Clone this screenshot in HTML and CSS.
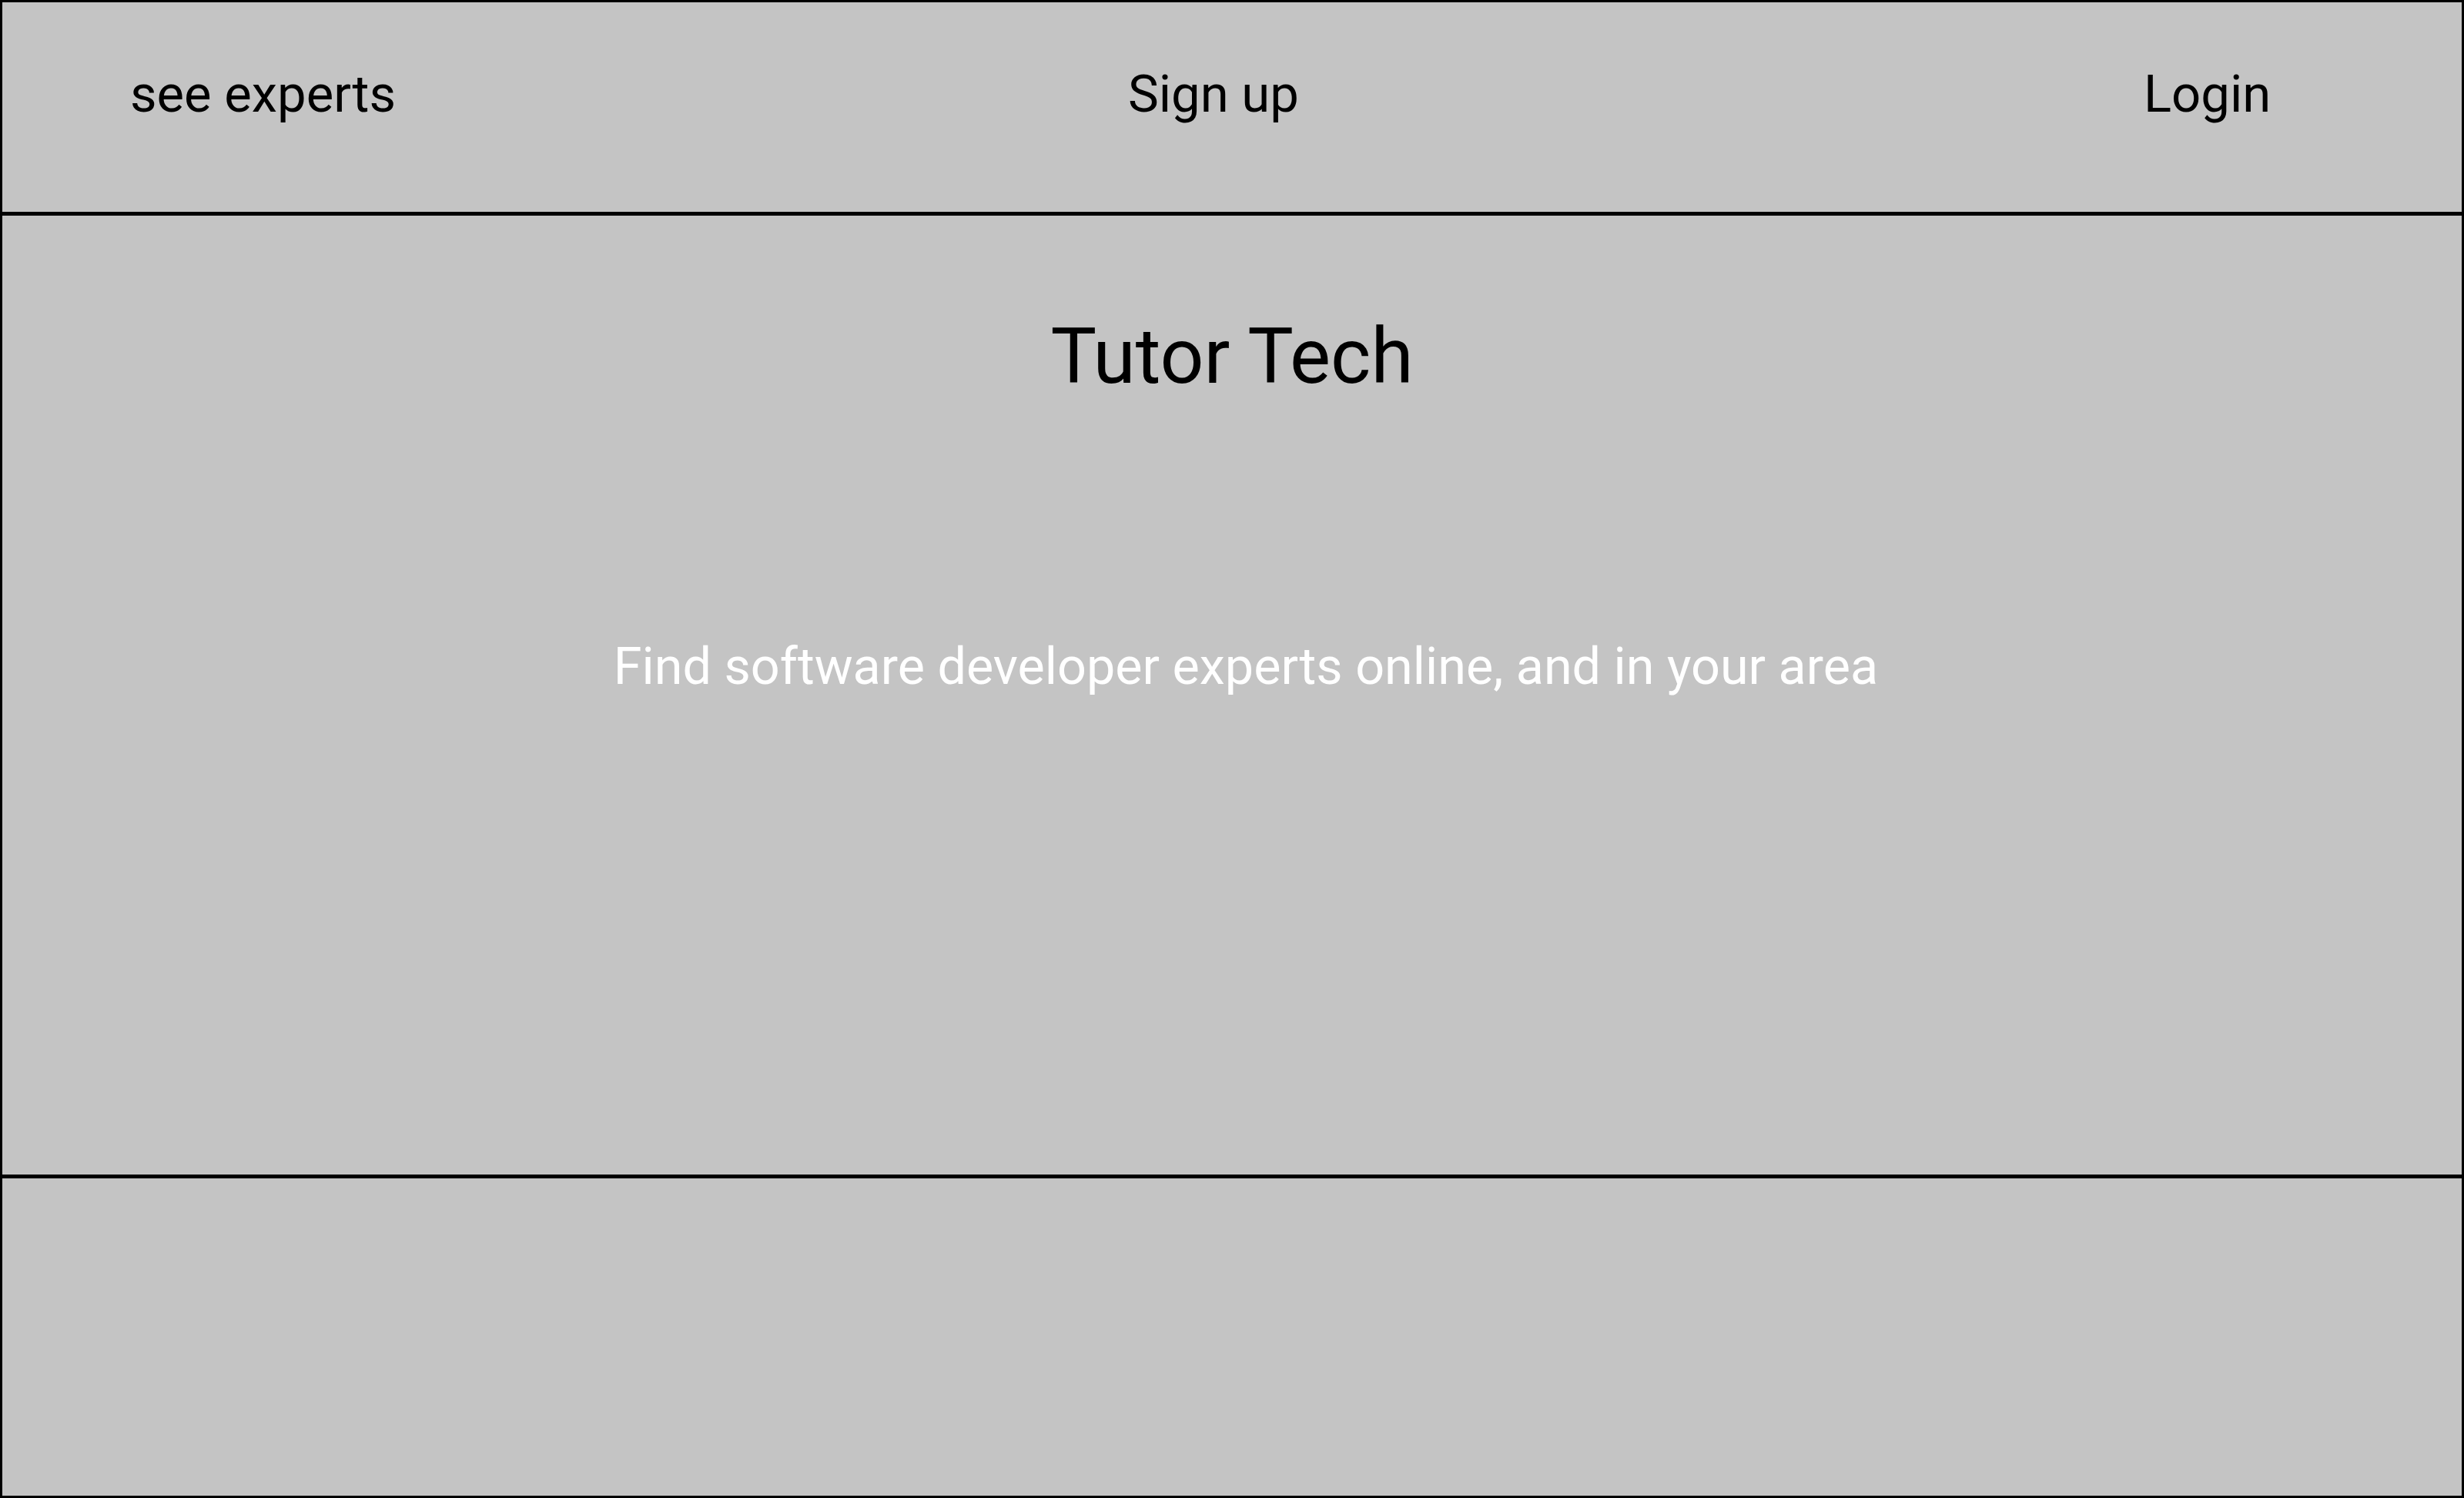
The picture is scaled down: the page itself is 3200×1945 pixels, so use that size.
FILE: index.html
```html
<!DOCTYPE html>
<html lang="en">
<head>
<meta charset="utf-8">
<title>Tutor Tech</title>
<link rel="stylesheet" href="styles.css">
</head>
<body>
<div class="frame">
  <header class="topbar">
    <a class="nav-link">see experts</a>
    <a class="nav-link">Sign up</a>
    <a class="nav-link">Login</a>
  </header>
  <main class="hero">
    <h1 class="title">Tutor Tech</h1>
    <p class="tagline">Find software developer experts online, and in your area</p>
  </main>
  <footer class="footer"></footer>
</div>
</body>
</html>
```
FILE: styles.css
```css
html, body {
  margin: 0;
  padding: 0;
  background: #c4c4c4;
}
.frame {
  box-sizing: border-box;
  width: 3200px;
  height: 1945px;
  border: 3px solid #000;
  background: #c4c4c4;
  display: flex;
  flex-direction: column;
  font-family: Roboto, "Liberation Sans", sans-serif;
}
.topbar {
  box-sizing: border-box;
  height: 277px;
  border-bottom: 5px solid #000;
  display: grid;
  grid-template-columns: 1296px 1319px auto;
  padding-left: 166px;
  padding-top: 74px;
}
.nav-link {
  font-size: 67px;
  line-height: 90px;
  color: #000;
  text-decoration: none;
}
.hero {
  box-sizing: border-box;
  height: 1250px;
  border-bottom: 5px solid #000;
  display: flex;
  flex-direction: column;
  align-items: center;
}
.title {
  margin: 118px 0 0 0;
  font-size: 100px;
  font-weight: 400;
  line-height: 130px;
  color: #000;
}
.tagline {
  margin: 297px 0 0 36px;
  font-size: 66.5px;
  line-height: 80px;
  color: #fff;
}
.footer {
  flex: 1;
}
```
